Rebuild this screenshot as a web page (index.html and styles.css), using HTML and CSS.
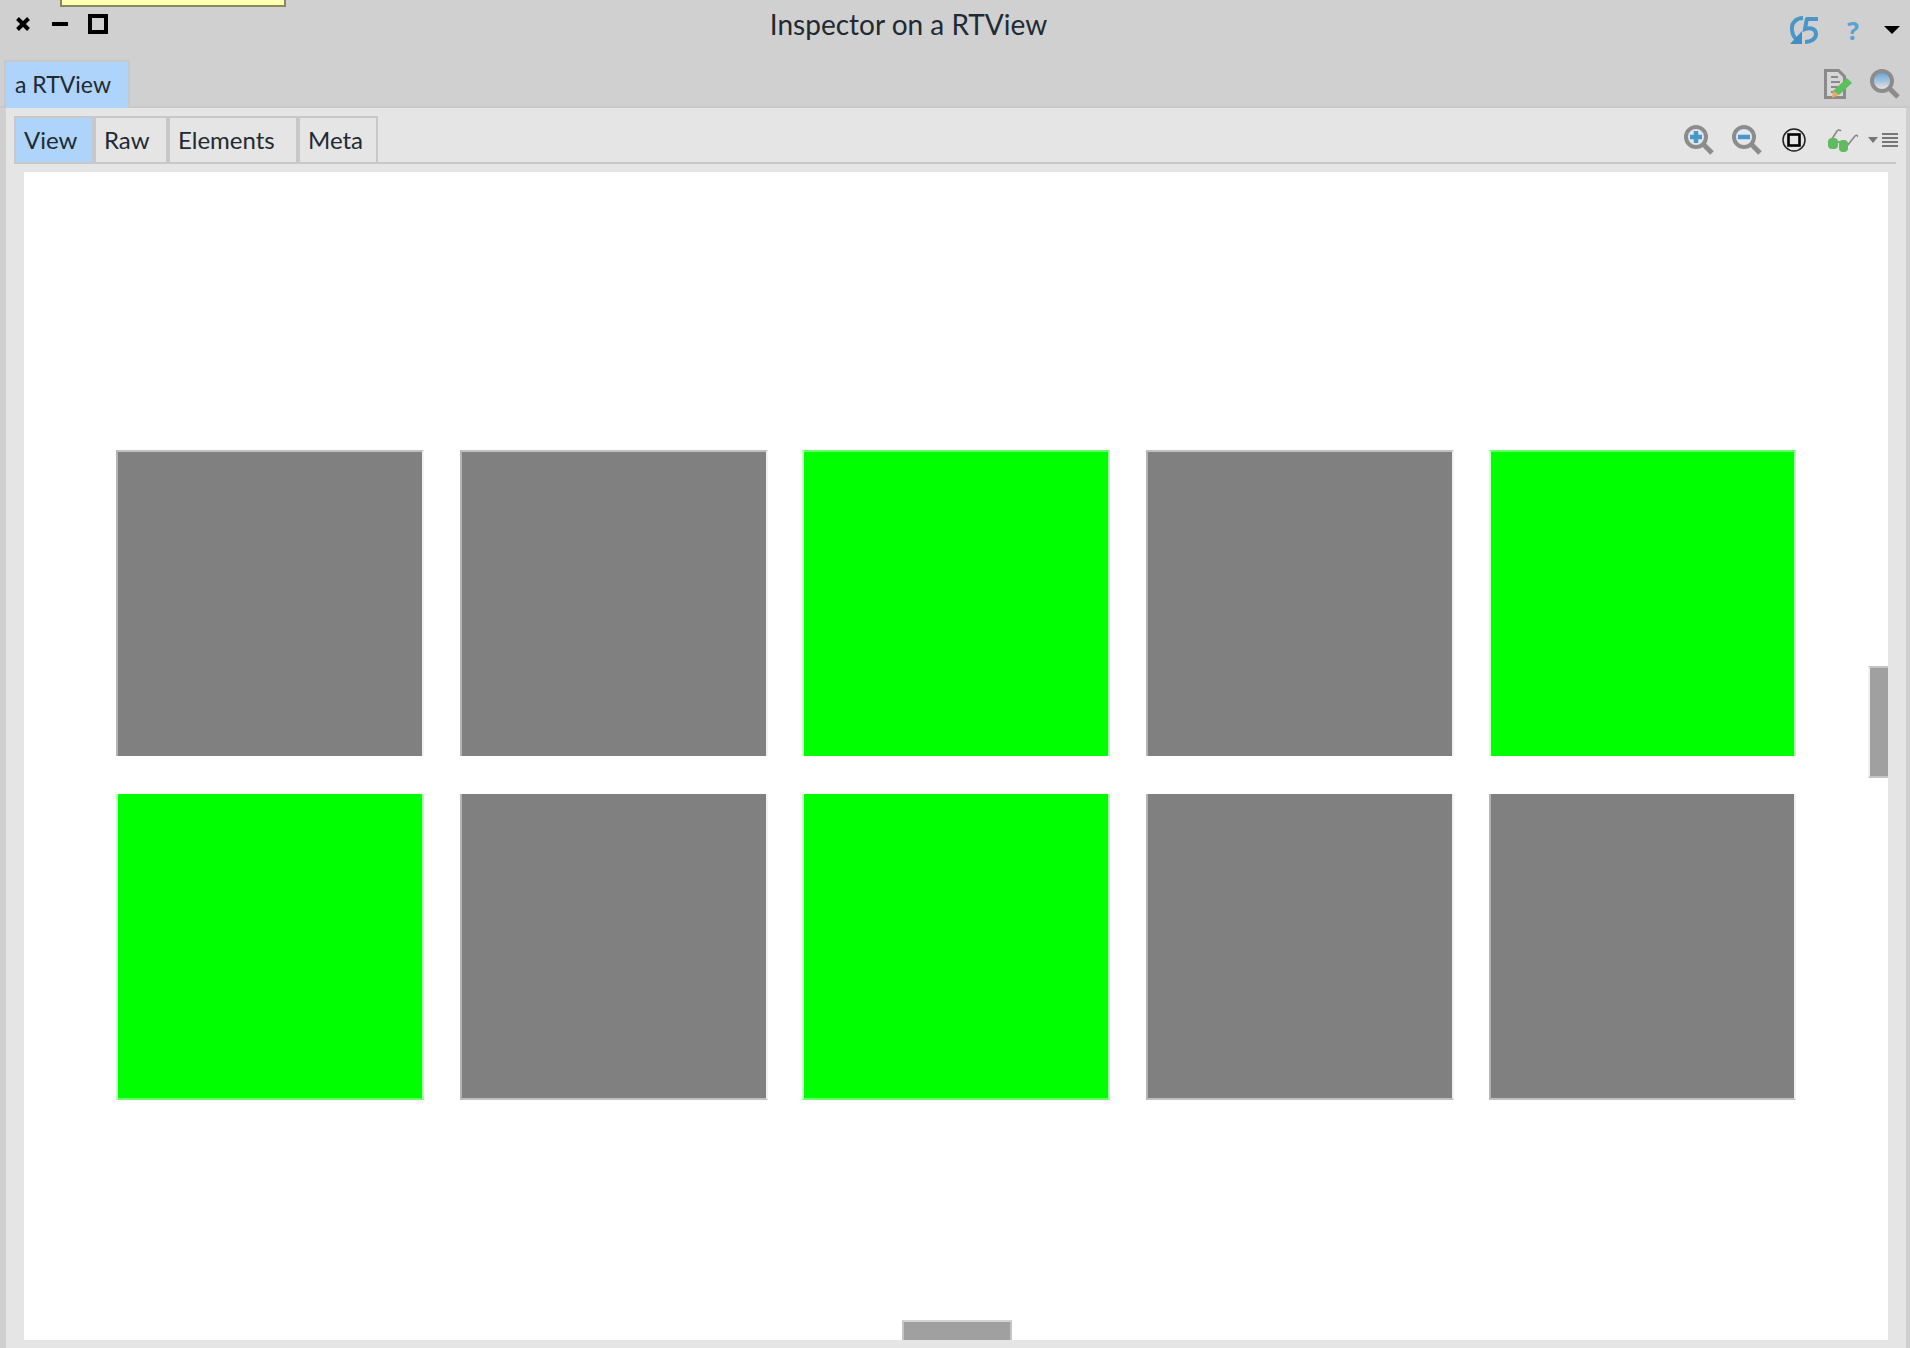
FILE: index.html
```html
<!DOCTYPE html>
<html lang="en">
<head>
<meta charset="utf-8">
<title>Inspector on a RTView</title>
<link rel="stylesheet" href="styles.css">
</head>
<body>
<div class="window">
  <div class="tooltip"></div>
  <header class="titlebar">
    <div class="controls">
      <svg class="ctl-close" width="14" height="14" viewBox="0 0 14 14"><path d="M1.5 1.5l11 11M12.5 1.5l-11 11" stroke="#000" stroke-width="4" fill="none"/></svg>
      <span class="ctl-min"></span>
      <span class="ctl-max"></span>
    </div>
    <h1 class="title">Inspector on a RTView</h1>
    <div class="title-actions">
      <svg class="act-sync" width="28" height="28" viewBox="0 0 28 28"><g fill="none" stroke="#4a96c8" stroke-width="4"><path d="M9 25C1 21 0 9 5 5c2-2 5-3 8-3"/><path d="M16 3h12"/><path d="M17 2l-2 11c6-2 11 0 11 5 0 5-5 8-11 8"/></g><path d="M0 28l12-13v13z" fill="#3f8fc6"/></svg>
      <span class="act-help">?</span>
      <svg class="act-caret" width="16" height="8" viewBox="0 0 16 8"><path d="M0 0h16L8 8z" fill="#000"/></svg>
    </div>
  </header>
  <div class="outer-tabs">
    <div class="outer-tab">a RTView</div>
    <div class="outer-actions">
      <svg width="28" height="30" viewBox="0 0 28 30"><path d="M1.5 1.5h13l6 6v21h-19z" fill="#d6d6d6" stroke="#8a8a8a" stroke-width="3"/><path d="M7 8h7M7 13h9M7 18h7M7 23h4" stroke="#8a8a8a" stroke-width="2"/><path d="M23 9l5 5-13 12-6-4z" fill="#5cc05c"/><path d="M9 22l6 4-7 3z" fill="#f0a860"/></svg>
      <svg width="30" height="30" viewBox="0 0 30 30"><defs><linearGradient id="lens" x1="0" y1="0" x2="0" y2="1"><stop offset="0" stop-color="#5f9fd2"/><stop offset=".55" stop-color="#a9c8e0"/><stop offset=".8" stop-color="#dcdcdc"/></linearGradient></defs><circle cx="12" cy="12" r="10" fill="url(#lens)" stroke="#8c8c8c" stroke-width="4"/><path d="M19 19l9 9" stroke="#8c8c8c" stroke-width="5"/></svg>
    </div>
  </div>
  <main class="panel">
    <div class="inner-bar">
      <nav class="inner-tabs">
        <div class="inner-tab tab-view is-active">View</div>
        <div class="inner-tab tab-raw">Raw</div>
        <div class="inner-tab tab-elements">Elements</div>
        <div class="inner-tab tab-meta">Meta</div>
      </nav>
      <div class="inner-actions">
        <svg class="i-plus" width="30" height="30" viewBox="0 0 30 30"><circle cx="12" cy="12" r="10" fill="#e2e8ee" stroke="#8c8c8c" stroke-width="4"/><path d="M19 19l9 9" stroke="#8c8c8c" stroke-width="5"/><path d="M6 12h12M12 6v12" stroke="#4a96c8" stroke-width="4.5"/></svg>
        <svg class="i-minus" width="30" height="30" viewBox="0 0 30 30"><circle cx="12" cy="12" r="10" fill="#e2e8ee" stroke="#8c8c8c" stroke-width="4"/><path d="M19 19l9 9" stroke="#8c8c8c" stroke-width="5"/><path d="M6 12h12" stroke="#4a96c8" stroke-width="4.5"/></svg>
        <svg class="i-fit" width="24" height="24" viewBox="0 0 24 24"><circle cx="12" cy="12" r="11" fill="none" stroke="#222" stroke-width="1.5"/><rect x="6.5" y="6.5" width="11" height="11" fill="none" stroke="#000" stroke-width="2.6"/></svg>
        <svg class="i-glasses" width="30" height="24" viewBox="0 0 30 24"><path d="M4 11L9 3q2-2 4 0M19 18L27 8q2-2 3 1" fill="none" stroke="#888" stroke-width="1.6"/><rect x="0" y="10" width="10" height="11" rx="4" fill="#5fbb5f"/><rect x="11" y="12" width="9" height="12" rx="4" fill="#5fbb5f"/><path d="M9 14h3" stroke="#5fbb5f" stroke-width="2"/></svg>
        <svg class="i-caret" width="10" height="6" viewBox="0 0 10 6"><path d="M0 0h10L5 6z" fill="#777"/></svg>
        <svg class="i-menu" width="16" height="14" viewBox="0 0 16 14"><path d="M0 1h16M0 5h16M0 9h16M0 13h16" stroke="#777" stroke-width="1.8"/></svg>
      </div>
    </div>
    <section class="canvas">
      <div class="grid">
        <div class="cell cell-gray"></div>
        <div class="cell cell-gray"></div>
        <div class="cell cell-green"></div>
        <div class="cell cell-gray"></div>
        <div class="cell cell-green"></div>
        <div class="cell cell-green"></div>
        <div class="cell cell-gray"></div>
        <div class="cell cell-green"></div>
        <div class="cell cell-gray"></div>
        <div class="cell cell-gray"></div>
      </div>
      <div class="scroll-v"></div>
      <div class="scroll-h"></div>
    </section>
  </main>
</div>
</body>
</html>
```
FILE: styles.css
```css
* { box-sizing: border-box; }
html, body { margin: 0; height: 100%; }
body {
  background: #d0d0d0;
  font-family: "Lato", "Noto Sans", sans-serif;
  color: #1f2a33;
  overflow: hidden;
}
.window {
  position: relative;
  height: 1348px;
  display: flex;
  flex-direction: column;
}
.tooltip {
  position: absolute;
  left: 60px;
  top: -2px;
  width: 226px;
  height: 9px;
  background: #ffffb4;
  border: 2px solid #88885c;
}
.titlebar {
  height: 60px;
  flex: none;
  display: flex;
}
.controls {
  display: flex;
  align-items: center;
  width: 120px;
  height: 48px;
  padding-left: 16px;
}
.ctl-min {
  width: 16px;
  height: 4px;
  margin-left: 22px;
  background: #000;
}
.ctl-max {
  width: 20px;
  height: 20px;
  margin-left: 20px;
  border: 4px solid #000;
}
.title {
  flex: 1;
  margin: 0;
  padding-right: 3px;
  font-size: 28px;
  line-height: 48px;
  font-weight: 400;
  text-align: center;
}
.title-actions {
  display: flex;
  align-items: center;
  height: 60px;
  padding-right: 10px;
  width: 210px;
  justify-content: flex-end;
}
.act-help {
  width: 14px;
  margin-left: 28px;
  margin-right: 24px;
  font-family: "Noto Sans", sans-serif;
  font-size: 25px;
  font-weight: 700;
  line-height: 28px;
  color: #5aa2cf;
  text-align: center;
}
.outer-tabs {
  height: 48px;
  flex: none;
  display: flex;
  justify-content: space-between;
  border-bottom: 2px solid #c8c8c8;
  padding-left: 4px;
}
.outer-tab {
  width: 126px;
  height: 48px;
  background: #aed4fb;
  border: 2px solid #c8c8c8;
  border-bottom: 0;
  padding-left: 9px;
  font-size: 23px;
  line-height: 44px;
}
.outer-actions {
  display: flex;
  align-items: center;
  gap: 18px;
  padding: 2px 10px 0 0;
}
.panel {
  flex: 1;
  min-height: 0;
  display: flex;
  flex-direction: column;
  margin: 0 4px 0 6px;
  background: #e5e5e5;
}
.inner-bar {
  flex: none;
  height: 48px;
  margin: 8px 10px 0 8px;
  display: flex;
  justify-content: space-between;
  border-bottom: 2px solid #c8c8c8;
}
.inner-tabs {
  display: flex;
  height: 48px;
}
.inner-tab {
  height: 48px;
  border: 2px solid #c8c8c8;
  padding-left: 8px;
  font-size: 24px;
  line-height: 44px;
}
.is-active { background: #aed4fb; }
.tab-view { width: 80px; }
.tab-raw { width: 74px; }
.tab-elements { width: 130px; }
.tab-meta { width: 80px; }
.inner-actions {
  display: flex;
  align-items: center;
  padding-top: 2px;
}
.i-minus { margin-left: 18px; }
.i-fit { margin-left: 20px; }
.i-glasses { margin-left: 22px; }
.i-caret { margin-left: 10px; }
.i-menu { margin-left: 4px; margin-right: -2px; }
.canvas {
  position: relative;
  flex: 1;
  min-height: 0;
  margin: 8px 18px;
  background: #fff;
  padding: 278px 0 0 92px;
}
.grid {
  display: grid;
  grid-template-columns: 344px 342px 344px 343px 307px;
  grid-auto-rows: 306px;
  row-gap: 38px;
}
.cell {
  border-style: solid;
  border-width: 2px;
  width: 308px;
}
.cell:nth-child(5n) { width: 307px; }
.cell:nth-child(-n+5) { border-bottom-width: 0; }
.cell:nth-child(n+6) { border-top-width: 0; }
.cell-gray {
  background: #808080;
  border-color: #c0c0c0 #f2f2f2 #c0c0c0 #b4b4b4;
}
.cell-green {
  background: #00ff00;
  border-color: #66ff66 #b0ffb0 #66ff66 #ccffcc;
}
.scroll-v {
  position: absolute;
  right: 0;
  top: 494px;
  width: 20px;
  height: 112px;
  background: #a0a0a0;
  border-top: 2px solid #c4c4c4;
  border-bottom: 2px solid #c4c4c4;
  border-left: 2px solid #f0f0f0;
}
.scroll-h {
  position: absolute;
  left: 878px;
  bottom: 0;
  width: 110px;
  height: 20px;
  background: #a0a0a0;
  border-top: 2px solid #d4d4d4;
  border-left: 2px solid #c4c4c4;
  border-right: 2px solid #c4c4c4;
}
```
